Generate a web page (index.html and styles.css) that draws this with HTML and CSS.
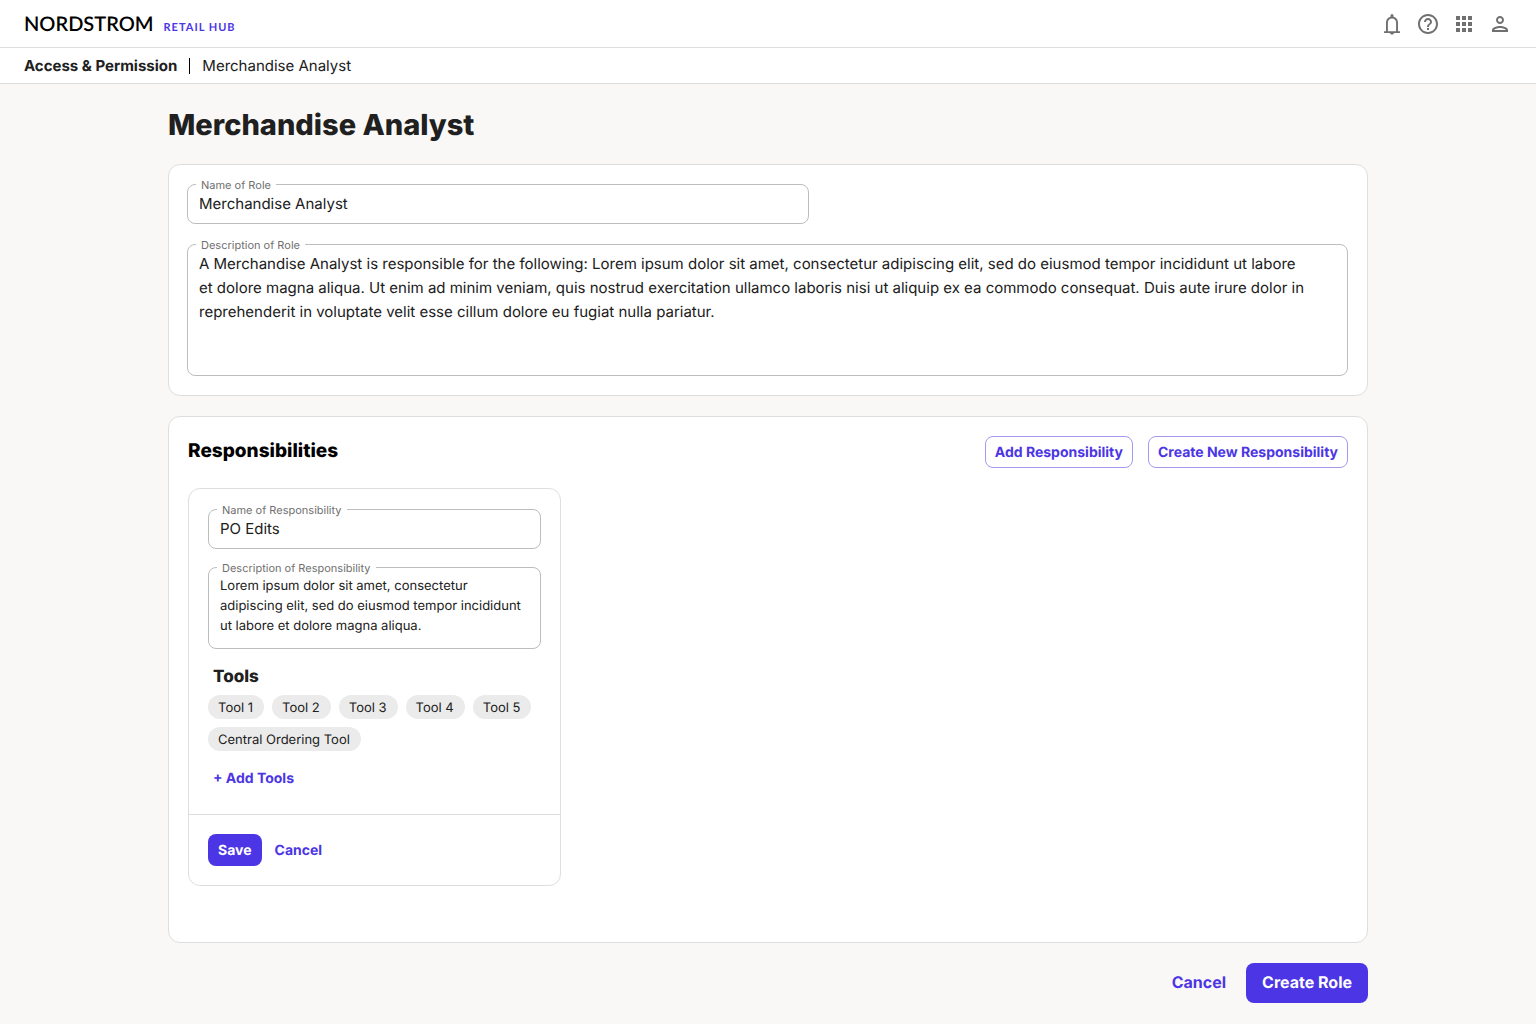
FILE: index.html
```
<!DOCTYPE html>
<html lang="en">
<head>
  <meta charset="UTF-8">
  <meta name="viewport" content="width=device-width, initial-scale=1.0">
  <title>Merchandise Analyst | Retail Hub</title>
  <link rel="stylesheet" href="styles.css">
</head>
<body>

  <header class="topbar">
    <a class="logo" href="#">
      <span class="logo-name">NORDSTROM</span>
      <span class="logo-hub">RETAIL HUB</span>
    </a>
    <div class="topbar-icons">
      <button type="button" class="icon-button" aria-label="Notifications">
        <svg viewBox="0 0 24 24"><path d="M4 19.200h2v-8.700c0-2.900 1.800-5.100 4.500-5.700V3.500a1.500 1.500 0 0 1 3 0v1.300c2.700.6 4.500 2.800 4.500 5.700v8.700h2V21H4zm3.900 0h8.200v-8.700c0-2.400-1.600-4.100-4.100-4.100s-4.100 1.700-4.100 4.100zM10 21h4c0 .9-.9 1.500-2 1.500s-2-.6-2-1.500z"/></svg>
      </button>
      <button type="button" class="icon-button" aria-label="Help">
        <svg viewBox="0 0 24 24"><path d="M11 18h2v-2h-2v2zm1-16C6.480 2 2 6.480 2 12s4.480 10 10 10 10-4.480 10-10S17.520 2 12 2zm0 18c-4.410 0-8-3.590-8-8s3.590-8 8-8 8 3.590 8 8-3.590 8-8 8zm0-14c-2.210 0-4 1.790-4 4h2c0-1.100.9-2 2-2s2 .9 2 2c0 2-3 1.750-3 5h2c0-2.250 3-2.500 3-5 0-2.210-1.790-4-4-4z"/></svg>
      </button>
      <button type="button" class="icon-button" aria-label="Apps">
        <svg viewBox="0 0 24 24"><path d="M4 8h4V4H4v4zm6 12h4v-4h-4v4zm-6 0h4v-4H4v4zm0-6h4v-4H4v4zm6 0h4v-4h-4v4zm6-10v4h4V4h-4zm-6 4h4V4h-4v4zm6 6h4v-4h-4v4zm0 6h4v-4h-4v4z"/></svg>
      </button>
      <button type="button" class="icon-button" aria-label="Account">
        <svg viewBox="0 0 24 24"><path d="M12 6c1.100 0 2 .9 2 2s-.9 2-2 2-2-.9-2-2 .9-2 2-2m0 10c2.700 0 5.800 1.290 6 2H6c.23-.72 3.310-2 6-2m0-12C9.790 4 8 5.790 8 8s1.790 4 4 4 4-1.790 4-4-1.790-4-4-4zm0 10c-2.670 0-8 1.340-8 4v2h16v-2c0-2.660-5.330-4-8-4z"/></svg>
      </button>
    </div>
  </header>

  <nav class="breadcrumb" aria-label="Breadcrumb">
    <a class="breadcrumb-section" href="#">Access &amp; Permission</a>
    <span class="breadcrumb-page">Merchandise Analyst</span>
  </nav>

  <main>
    <h1>Merchandise Analyst</h1>

    <section class="panel role">
      <div class="field role-name">
        <label for="role-name">Name of Role</label>
        <input type="text" id="role-name" value="Merchandise Analyst">
      </div>
      <div class="field">
        <label for="role-desc">Description of Role</label>
        <textarea id="role-desc">A Merchandise Analyst is responsible for the following: Lorem ipsum dolor sit amet, consectetur adipiscing elit, sed do eiusmod tempor incididunt ut labore et dolore magna aliqua. Ut enim ad minim veniam, quis nostrud exercitation ullamco laboris nisi ut aliquip ex ea commodo consequat. Duis aute irure dolor in reprehenderit in voluptate velit esse cillum dolore eu fugiat nulla pariatur.</textarea>
      </div>
    </section>

    <section class="panel responsibilities">
      <div class="panel-header">
        <h2>Responsibilities</h2>
        <div class="panel-actions">
          <button type="button" class="btn btn-outline">Add Responsibility</button>
          <button type="button" class="btn btn-outline">Create New Responsibility</button>
        </div>
      </div>

      <div class="card-grid">
        <article class="card">
          <div class="card-body">
            <div class="field">
              <label for="resp-name">Name of Responsibility</label>
              <input type="text" id="resp-name" value="PO Edits">
            </div>
            <div class="field field-small">
              <label for="resp-desc">Description of Responsibility</label>
              <textarea id="resp-desc">Lorem ipsum dolor sit amet, consectetur adipiscing elit, sed do eiusmod tempor incididunt ut labore et dolore magna aliqua.</textarea>
            </div>
            <h3>Tools</h3>
            <ul class="chips">
              <li>Tool 1</li>
              <li>Tool 2</li>
              <li>Tool 3</li>
              <li>Tool 4</li>
              <li>Tool 5</li>
              <li>Central Ordering Tool</li>
            </ul>
            <button type="button" class="btn btn-text add-tools">+ Add Tools</button>
          </div>
          <div class="card-footer">
            <button type="button" class="btn btn-primary">Save</button>
            <button type="button" class="btn btn-text">Cancel</button>
          </div>
        </article>
      </div>
    </section>

    <div class="page-actions">
      <button type="button" class="btn btn-text btn-large">Cancel</button>
      <button type="button" class="btn btn-primary btn-large">Create Role</button>
    </div>
  </main>

</body>
</html>
```
FILE: styles.css
```
* {
  box-sizing: border-box;
}
body {
  font-family: Inter, "Liberation Sans", sans-serif;
  font-size: 15px;
  line-height: 24px;
  text-rendering: geometricPrecision;
  background: #f9f8f6;
  color: #202020;
  margin: 0;
}
h1, h2, h3, ul {
  margin: 0;
  padding: 0;
}
h1, h2, h3 {
  font-weight: 800;
}
button, input, textarea {
  font: inherit;
  color: inherit;
  text-rendering: inherit;
}

/* top bar */
.topbar {
  display: flex;
  justify-content: space-between;
  align-items: center;
  height: 48px;
  padding: 0 24px;
  background: #fff;
  border-bottom: 1px solid #dedede;
}
.logo {
  display: flex;
  align-items: baseline;
  gap: 10px;
  padding-top: 4px;
  font-family: Lato, sans-serif;
  text-decoration: none;
}
.logo-name {
  font-size: 20px;
  font-weight: 600;
  color: #000;
}
.logo-hub {
  font-size: 11px;
  font-weight: 700;
  letter-spacing: 1px;
  color: #4b35e4;
}
.topbar-icons {
  display: flex;
  gap: 12px;
}
.icon-button {
  width: 24px;
  height: 24px;
  padding: 0;
  border: none;
  background: none;
  cursor: pointer;
}
.icon-button svg {
  display: block;
  fill: #707070;
}

.breadcrumb {
  display: flex;
  align-items: center;
  height: 36px;
  padding: 0 24px;
  background: #fff;
  border-bottom: 1px solid #dedede;
}
.breadcrumb-section {
  font-weight: 700;
  color: inherit;
  text-decoration: none;
}
.breadcrumb-page {
  display: flex;
  align-items: center;
}
.breadcrumb-page::before {
  content: "";
  width: 1px;
  height: 16px;
  margin: 0 12px;
  background: #000;
}

/* page */
main {
  max-width: 1200px;
  margin: 0 auto;
  padding: 21px 0;
}
h1 {
  font-size: 29px;
  line-height: 40px;
  margin-bottom: 19px;
}
.panel {
  background: #fff;
  border: 1px solid #dedede;
  border-radius: 12px;
  margin-bottom: 20px;
}
.role {
  display: flex;
  flex-direction: column;
  gap: 20px;
  padding: 19px 19px 19px 18px;
}
.role-name {
  width: 622px;
  max-width: 100%;
}

/* outlined fields with the label on the border */
.field {
  position: relative;
}
.field label {
  position: absolute;
  top: -7px;
  left: 9px;
  padding: 0 5px;
  font-size: 11px;
  line-height: 16px;
  color: #707070;
  background: #fff;
}
.field input,
.field textarea {
  display: block;
  width: 100%;
  padding: 7px 11px;
  border: 1px solid #bdbdbd;
  border-radius: 8px;
  background: #fff;
  resize: none;
}
.field input {
  height: 40px;
  padding: 6px 11px 8px;
}
.role textarea {
  height: 132px;
  padding-right: 38px;
}
.field-small textarea {
  height: 82px;
  padding-top: 8px;
  font-size: 13px;
  line-height: 20px;
}

/* buttons */
.btn {
  height: 32px;
  padding: 2px 9px 0;
  border: 1px solid transparent;
  border-radius: 8px;
  background: none;
  color: #4b35e4;
  font-size: 14px;
  font-weight: 700;
  cursor: pointer;
}
.btn-outline {
  border-color: #a598f1;
}
.btn-primary {
  background: #4b35e4;
  color: #fff;
}
.btn-text {
  padding: 2px 4px 0;
}
.btn-large {
  height: 40px;
  padding: 0 15px 2px;
  font-size: 16px;
}
.btn-text.btn-large {
  padding: 0 4px 2px;
}

/* responsibilities */
.responsibilities {
  padding: 19px 19px 56px;
}
.panel-header {
  display: flex;
  justify-content: space-between;
  margin-bottom: 20px;
}
.panel-actions {
  display: flex;
  gap: 15px;
}
h2 {
  font-size: 19px;
  line-height: 30px;
  color: #000;
}
.card-grid {
  display: grid;
  grid-template-columns: repeat(3, 373px);
  gap: 20px;
}
.card {
  border: 1px solid #dedede;
  border-radius: 12px;
}
.card-body {
  padding: 20px 19px;
}
.card-body .field {
  margin-bottom: 18px;
}
h3 {
  padding-left: 5px;
  font-size: 17px;
  line-height: 20px;
  margin-bottom: 8px;
}
.chips {
  display: flex;
  flex-wrap: wrap;
  gap: 8px;
  list-style: none;
}
.chips li {
  height: 24px;
  padding: 1px 11px 0 10px;
  border-radius: 12px;
  background: #ebebeb;
  font-size: 13px;
}
.add-tools {
  display: block;
  margin-top: 11px;
}
.card-footer {
  display: flex;
  gap: 8px;
  padding: 19px;
  border-top: 1px solid #dedede;
}
.page-actions {
  display: flex;
  justify-content: flex-end;
  gap: 15px;
}
```
